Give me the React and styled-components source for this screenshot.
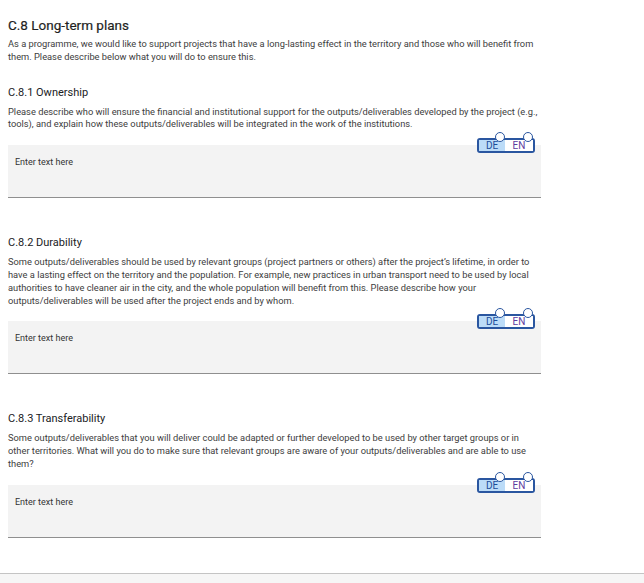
import React from "react";
import styled, { createGlobalStyle } from "styled-components";

const Global = createGlobalStyle`
  html, body { margin: 0; padding: 0; background: #ffffff; }
  body { font-family: Roboto, "Noto Sans", "Liberation Sans", sans-serif; }
  * { box-sizing: border-box; }
`;

const Page = styled.div`
  min-height: 583px;
  display: flex;
  flex-direction: column;
`;

const Content = styled.main`
  width: 541px;
  padding: 17px 0 0 8px;
  display: flex;
  flex-direction: column;
`;

const Title = styled.h1`
  margin: 0;
  font-size: 13.5px;
  line-height: 16px;
  font-weight: 400;
  color: #1f1f1f;
  -webkit-text-stroke: 0.2px #1f1f1f;
`;

const Text = styled.p`
  margin: ${(p) => p.$top || 6}px 0 0;
  font-size: 9.3px;
  line-height: 12.8px;
  color: #3d3d3d;
`;

const Section = styled.section`
  margin-top: ${(p) => p.$top}px;
  display: flex;
  flex-direction: column;
`;

const Heading = styled.h2`
  margin: 0;
  font-size: 11px;
  line-height: 14px;
  font-weight: 400;
  color: #202124;
`;

const FieldWrap = styled.div`
  position: relative;
  margin-top: 14px;
`;

const Field = styled.div`
  height: 53px;
  background: #f3f3f3;
  border-bottom: 1px solid #8f8f8f;
  padding: 11px 7px 0;
  font-size: 9px;
  line-height: 13px;
  color: #333;
`;

const Toggle = styled.div`
  position: absolute;
  top: -7px;
  right: 6px;
  display: flex;
  height: 15px;
  padding: 0;
  border: 2px solid #2a56a0;
  border-radius: 3px;
  background: #fff;
`;

const Lang = styled.span`
  position: relative;
  width: ${(p) => p.$w}px;
  display: flex;
  align-items: center;
  justify-content: center;
  font-size: 10px;
  line-height: 11px;
  background: ${(p) => (p.$active ? "#bcdcf8" : "#ffffff")};
  color: ${(p) => (p.$active ? "#1d4d9a" : "#5e3c9f")};
`;

const Handle = styled.i`
  position: absolute;
  top: -8px;
  right: ${(p) => p.$r}px;
  width: 10px;
  height: 10px;
  border-radius: 50%;
  border: 1px solid #2a56a0;
  background: #fff;
`;

const Footer = styled.footer`
  margin-top: auto;
  height: 10px;
  border-top: 1px solid #c4c4c4;
  background: #f6f6f6;
`;

const sections = [
  {
    id: "C.8.1 Ownership",
    top: 22,
    text:
      "Please describe who will ensure the financial and institutional support for the outputs/deliverables developed by the project (e.g., tools), and explain how these outputs/deliverables will be integrated in the work of the institutions.",
  },
  {
    id: "C.8.2 Durability",
    top: 38,
    text:
      "Some outputs/deliverables should be used by relevant groups (project partners or others) after the project\u2019s lifetime, in order to have a lasting effect on the territory and the population. For example, new practices in urban transport need to be used by local authorities to have cleaner air in the city, and the whole population will benefit from this. Please describe how your outputs/deliverables will be used after the project ends and by whom.",
  },
  {
    id: "C.8.3 Transferability",
    top: 38,
    text:
      "Some outputs/deliverables that you will deliver could be adapted or further developed to be used by other target groups or in other territories. What will you do to make sure that relevant groups are aware of your outputs/deliverables and are able to use them?",
  },
];

function LangToggle() {
  return (
    <Toggle>
      <Lang $active $w={26}>
        DE
        <Handle $r={0} />
      </Lang>
      <Lang $w={28}>
        EN
        <Handle $r={0} />
      </Lang>
    </Toggle>
  );
}

export default function App() {
  return (
    <Page>
      <Global />
      <Content>
        <Title>C.8 Long-term plans</Title>
        <Text $top={5}>
          As a programme, we would like to support projects that have a long-lasting effect in the
          territory and those who will benefit from them. Please describe below what you will do to
          ensure this.
        </Text>
        {sections.map((s) => (
          <Section key={s.id} $top={s.top}>
            <Heading>{s.id}</Heading>
            <Text>{s.text}</Text>
            <FieldWrap>
              <LangToggle />
              <Field>Enter text here</Field>
            </FieldWrap>
          </Section>
        ))}
      </Content>
      <Footer />
    </Page>
  );
}
